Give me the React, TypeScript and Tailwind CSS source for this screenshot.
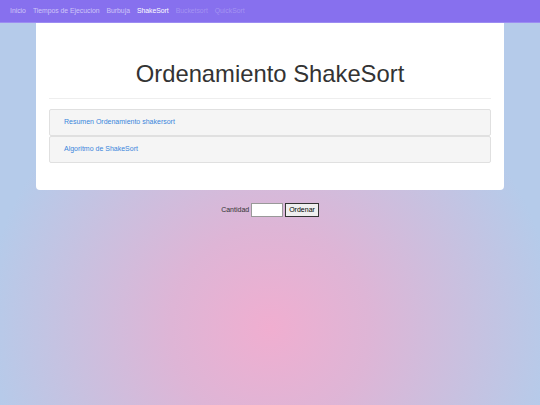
import { useState } from "react";

const links = [
  { label: "Inicio", tone: "text-white/60" },
  { label: "Tiempos de Ejecucion", tone: "text-white/60" },
  { label: "Burbuja", tone: "text-white/60" },
  { label: "ShakeSort", tone: "text-white" },
  { label: "Bucketsort", tone: "text-white/25" },
  { label: "QuickSort", tone: "text-white/25" },
];

const panels = ["Resumen Ordenamiento shakersort", "Algoritmo de ShakeSort"];

const App = () => {
  const [cantidad, setCantidad] = useState("");

  return (
    <div className="min-h-[405px] bg-[#b5cbea] bg-[radial-gradient(circle_285px_at_50%_81%,#f0aed0_0%,#deb5d6_35%,#c8c1e0_70%,#b5cbea_100%)] font-['Liberation_Sans',Arial,sans-serif]">
      <nav className="flex h-[23px] items-center gap-[7px] border-b border-[#9c8cf2] bg-[#8770ee] px-[10px] text-[6.8px]">
        {links.map((link) => (
          <a key={link.label} className={link.tone}>
            {link.label}
          </a>
        ))}
      </nav>

      <div className="mx-[36px] rounded-b-[4px] bg-white px-[13px] pb-[27px]">
        <h1 className="pt-[36px] pb-[10px] text-center text-[23.8px] leading-[29px] text-[#333]">
          Ordenamiento ShakeSort
        </h1>
        <hr className="mb-[10px] border-[#eee]" />
        <div className="flex flex-col">
          {panels.map((p) => (
            <div
              key={p}
              className="flex h-[27px] items-center rounded-[2px] border border-[#e0e0e0] bg-[#f5f5f5] px-[14px] text-[7px] text-[#3a86dc]"
            >
              {p}
            </div>
          ))}
        </div>
      </div>

      <div className="mt-[13px] flex items-center justify-center gap-[2px] text-[7px] text-[#333]">
        <label>Cantidad</label>
        <input
          value={cantidad}
          onChange={(e) => setCantidad(e.target.value)}
          className="h-[14px] w-[32px] border border-[#999] bg-white"
        />
        <button className="h-[14px] border border-[#333] bg-[#efefef] px-[3px] text-[7px] text-black">
          Ordenar
        </button>
      </div>
    </div>
  );
};

export default App;
